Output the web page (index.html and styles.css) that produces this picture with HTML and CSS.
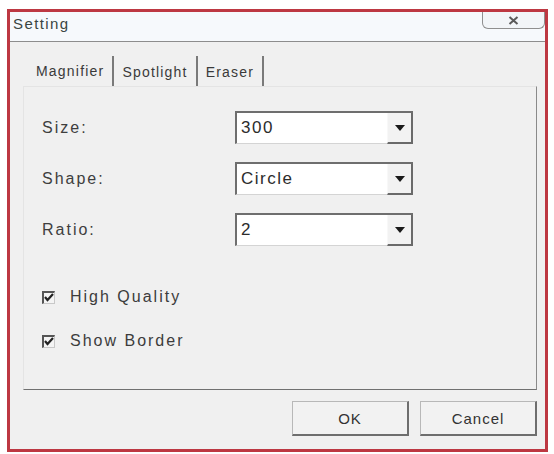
FILE: index.html
```html
<!DOCTYPE html>
<html lang="en">
<head>
  <meta charset="UTF-8" />
  <title>Setting</title>
  <link rel="stylesheet" href="styles.css">
</head>
<body>
  <div class="window">
    <div class="titlebar">
      <span class="title">Setting</span>
      <button type="button" class="close-btn" aria-label="Close">
        <svg width="11" height="9" viewBox="0 0 11 9"><path d="M1.5 1 L9.5 8 M9.5 1 L1.5 8" stroke="#5a5a5a" stroke-width="2" fill="none"/></svg>
      </button>
    </div>

    <div class="content">
      <div class="tabs">
        <div class="tab active">Magnifier</div>
        <div class="tab">Spotlight</div>
        <div class="tab">Eraser</div>
      </div>

      <div class="panel">
        <div class="fields">
          <label class="field-label">Size:</label>
          <div class="combo">
            <span class="combo-value">300</span>
            <span class="combo-btn"><i class="arrow"></i></span>
          </div>

          <label class="field-label">Shape:</label>
          <div class="combo">
            <span class="combo-value">Circle</span>
            <span class="combo-btn"><i class="arrow"></i></span>
          </div>

          <label class="field-label">Ratio:</label>
          <div class="combo">
            <span class="combo-value">2</span>
            <span class="combo-btn"><i class="arrow"></i></span>
          </div>
        </div>

        <div class="checks">
          <div class="check-row">
            <span class="checkbox">
              <svg width="10" height="9" viewBox="0 0 10 9"><path d="M1 4 L3.5 7 L9 1" stroke="#222" stroke-width="2.2" fill="none"/></svg>
            </span>
            <span class="check-text">High Quality</span>
          </div>
          <div class="check-row">
            <span class="checkbox">
              <svg width="10" height="9" viewBox="0 0 10 9"><path d="M1 4 L3.5 7 L9 1" stroke="#222" stroke-width="2.2" fill="none"/></svg>
            </span>
            <span class="check-text">Show Border</span>
          </div>
        </div>
      </div>

      <div class="actions">
        <button type="button" class="btn">OK</button>
        <button type="button" class="btn">Cancel</button>
      </div>
    </div>
  </div>
</body>
</html>
```

FILE: styles.css
```css
body {
  margin: 0;
  padding: 0;
  background: #fff;
  font-family: "Liberation Sans", Arial, sans-serif;
  color: #3c3c3c;
}

.window {
  position: relative;
  margin: 9px 0 0 7px;
  width: 535px;
  height: 437px;
  border: 3px solid #bd3842;
  display: flex;
  flex-direction: column;
  background: #f0f0f0;
}

.titlebar {
  height: 30px;
  border-bottom: 1px solid #8d8d8d;
  background: #f6f9fc;
  box-sizing: border-box;
}

.title {
  display: block;
  padding-left: 3px;
  line-height: 24px;
  font-size: 15px;
  letter-spacing: 1.4px;
  color: #3a4542;
}

.close-btn {
  position: absolute;
  top: 0;
  right: 0;
  width: 63px;
  height: 17px;
  padding: 0;
  border: 1px solid #8f8f8f;
  border-top: none;
  border-radius: 0 0 6px 6px;
  background: #f2f5f8;
  display: flex;
  justify-content: center;
  align-items: center;
}

.content {
  flex: 1;
  display: flex;
  flex-direction: column;
  padding: 14px 8px 0 13px;
}

.tabs {
  display: flex;
  height: 30px;
  margin-left: 4px;
}

.tab {
  display: flex;
  align-items: center;
  padding: 2px 8px 0 8px;
  border-right: 2px solid #7a7a7a;
  font-size: 14px;
  letter-spacing: 1.2px;
  color: #3a3a3a;
}

.tab.active {
  padding: 0 8px 0 9px;
}

.panel {
  border-top: 1px solid #e4e4e4;
  border-left: 1px solid #e4e4e4;
  border-right: 1px solid #8a8a8a;
  border-bottom: 1px solid #707070;
  padding: 24px 0 0 18px;
  box-sizing: border-box;
  height: 304px;
}

.fields {
  display: grid;
  grid-template-columns: 193px 178px;
  grid-auto-rows: 33px;
  row-gap: 18px;
  align-items: center;
}

.field-label {
  font-size: 16px;
  letter-spacing: 2px;
  color: #3e3e3e;
}

.combo {
  display: flex;
  height: 33px;
  box-sizing: border-box;
  border-top: 2px solid #6e6e6e;
  border-left: 2px solid #6e6e6e;
  border-bottom: 1px solid #d4d4d4;
  background: #fff;
}

.combo-value {
  flex: 1;
  display: flex;
  align-items: center;
  padding-left: 4px;
  font-size: 17px;
  letter-spacing: 1.5px;
  color: #2c2c2c;
}

.combo-btn {
  width: 26px;
  box-sizing: border-box;
  border-left: 1px solid #f8f8f8;
  border-right: 2px solid #6a6a6a;
  border-bottom: 2px solid #6a6a6a;
  margin-bottom: -1px;
  background: #f2f2f2;
  display: flex;
  justify-content: center;
  align-items: center;
}

.arrow {
  width: 0;
  height: 0;
  border-left: 5px solid transparent;
  border-right: 5px solid transparent;
  border-top: 6px solid #1a1a1a;
}

.checks {
  display: flex;
  flex-direction: column;
  gap: 24px;
  margin-top: 41px;
}

.check-row {
  display: flex;
  align-items: center;
  height: 20px;
}

.checkbox {
  width: 13px;
  height: 13px;
  box-sizing: border-box;
  border-top: 2px solid #555;
  border-left: 2px solid #555;
  border-right: 1px solid #c8c8c8;
  border-bottom: 1px solid #c8c8c8;
  background: #f4f4f4;
  display: flex;
  justify-content: center;
  align-items: center;
  margin-right: 15px;
}

.check-text {
  font-size: 16px;
  letter-spacing: 2px;
  color: #3c3c3c;
}

.actions {
  display: flex;
  justify-content: flex-end;
  gap: 11px;
  margin-top: 11px;
}

.btn {
  width: 117px;
  height: 35px;
  padding: 0;
  border-top: 1px solid #b8b8b8;
  border-left: 1px solid #b8b8b8;
  border-right: 2px solid #6e6e6e;
  border-bottom: 2px solid #6e6e6e;
  background: #f2f2f2;
  font-family: "Liberation Sans", Arial, sans-serif;
  font-size: 15px;
  letter-spacing: 1px;
  color: #333;
}
```
